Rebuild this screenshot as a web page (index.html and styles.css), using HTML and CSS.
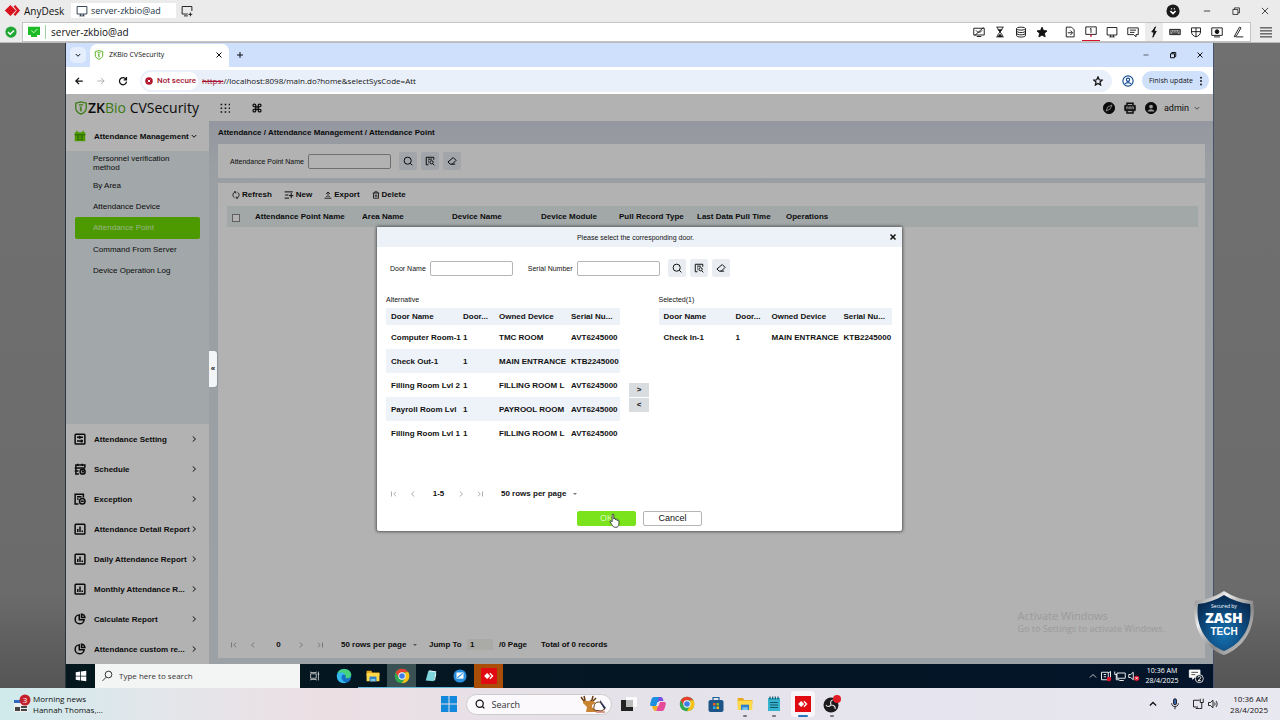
FILE: index.html
```html
<!DOCTYPE html>
<html lang="en">
<head>
<meta charset="utf-8">
<title>AnyDesk - server-zkbio@ad</title>
<link rel="stylesheet" href="styles.css">
</head>
<body>
<svg class="sprite" aria-hidden="true">
  <defs>
    <symbol id="monitor" viewBox="0 0 16 16"><path d="M1.500 2h13v10h-13zM6 14.500V12M10 14.500V12M4.500 14.500h7"/></symbol>
    <symbol id="monitor-add" viewBox="0 0 16 16"><path d="M9 12H1.500V2h13v6M4 14.500h5M12.500 10v5M10 12.500h5"/></symbol>
    <symbol id="min" viewBox="0 0 16 16"><path d="M3 8h10"/></symbol>
    <symbol id="restore" viewBox="0 0 16 16"><path d="M3 5.500h8v8H3zM5.500 5.500V3h8v8H11"/></symbol>
    <symbol id="close" viewBox="0 0 16 16"><path d="M3 3l10 10M13 3L3 13"/></symbol>
    <symbol id="plus" viewBox="0 0 16 16"><path d="M8 2v12M2 8h12"/></symbol>
    <symbol id="down" viewBox="0 0 16 16"><path d="M3.500 6L8 10.500 12.500 6"/></symbol>
    <symbol id="up" viewBox="0 0 16 16"><path d="M3 10.500L8 5.500l5 5"/></symbol>
    <symbol id="right" viewBox="0 0 16 16"><path d="M5.500 3L11 8l-5.500 5"/></symbol>
    <symbol id="left" viewBox="0 0 16 16"><path d="M10.500 3L5 8l5.500 5"/></symbol>
    <symbol id="first" viewBox="0 0 16 16"><path d="M3 3v10M12 3.500L7.500 8l4.500 4.500"/></symbol>
    <symbol id="last" viewBox="0 0 16 16"><path d="M13 3v10M4 3.500L8.500 8 4 12.500"/></symbol>
    <symbol id="search" viewBox="0 0 16 16"><circle cx="7.500" cy="7.500" r="5.700"/><path d="M11.500 11.500L15 15"/></symbol>
    <symbol id="search-list" viewBox="0 0 16 16"><path d="M5.500 14H2V2h12v4M5 5h6M5 8h1.500M5 11h1"/><circle cx="10.500" cy="10" r="2.600"/><path d="M12.500 12.500L15 15"/></symbol>
    <symbol id="eraser" viewBox="0 0 16 16"><path d="M10 2.500L14.500 7 8.500 13H5L1.500 9.500zM7.500 13H13"/></symbol>
    <symbol id="refresh" viewBox="0 0 16 16"><path d="M5 13.500A6.300 6.300 0 0 1 6 2M4 1.500h3.500V5M11 2.500A6.300 6.300 0 0 1 10 14M12 14.500H8.500V11"/></symbol>
    <symbol id="new" viewBox="0 0 16 16"><path d="M1 3h13M2 8h5M1 13h7M11.500 5v8M8 9h7"/></symbol>
    <symbol id="export" viewBox="0 0 16 16"><path d="M8 12V2M4 6l4-4 4 4M1 14.500h14M4 11.500h2M10 11.500h2"/></symbol>
    <symbol id="trash" viewBox="0 0 16 16"><path d="M1.500 4h13M5.500 4V1.500h5V4M3 4v10.500h10V4M6.500 7v5M9.500 7v5"/></symbol>
    <symbol id="setting" viewBox="0 0 16 16"><rect x="1.500" y="1.500" width="13" height="13" rx="1"/><path d="M4 5.500h2M9 5.500h3M4 10.500h4M11 10.500h1"/><circle cx="7.500" cy="5.500" r="1"/><circle cx="10" cy="10.500" r="1"/></symbol>
    <symbol id="schedule" viewBox="0 0 16 16"><path d="M6.500 14.500h-4v-12h12V6M1 6.500h14M5 1v3M11 1v3M1 10.500h5"/><circle cx="11.500" cy="11.500" r="3.300"/><path d="M11.500 9.500v2h2"/></symbol>
    <symbol id="exception" viewBox="0 0 16 16"><path d="M6 14.500H1.500v-13h11V6M4 5h6M4 8h2"/><circle cx="11" cy="11" r="3.700"/><path d="M9 11h4"/></symbol>
    <symbol id="bars" viewBox="0 0 16 16"><rect x="1.500" y="1.500" width="13" height="13" rx="1"/><path d="M5 12V8M8 12V4.500M11 12v-2"/></symbol>
    <symbol id="pie" viewBox="0 0 16 16"><path d="M7 2.500A6 6 0 1 0 13.500 9H7zM10 1.500V6h4.500A4.800 4.800 0 0 0 10 1.500z"/></symbol>
    <symbol id="shield" viewBox="0 0 16 16"><path d="M2 2.500L8 1l6 1.500V8c0 3.500-2.500 5.500-6 7-3.500-1.500-6-3.500-6-7z"/><path d="M5.500 4.500h5M8 6.500V12M6.500 7h1.500M6.500 9.500h1.500"/></symbol>
    <symbol id="star" viewBox="0 0 16 16"><path d="M8 1.500l2 4.500 4.700.5-3.500 3.200 1 4.800L8 12l-4.200 2.500 1-4.800L1.300 6.500 6 6z"/></symbol>
    <symbol id="user" viewBox="0 0 16 16"><circle cx="8" cy="8" r="6.800"/><circle cx="8" cy="6.300" r="2.200"/><path d="M4 12c1.500-2.500 6.500-2.500 8 0"/></symbol>
    <symbol id="anydesk" viewBox="0 0 16 16"><path fill="#fff" stroke="none" d="M1.500 8L5.500 4l4 4-4 4zM8.500 5l1.200-1.200L14 8l-4.300 4.200L8.500 11l3-3z"/></symbol>
    <symbol id="chrome" viewBox="0 0 24 24"><g stroke="none"><circle cx="12" cy="12" r="11" fill="#31a852"/><path fill="#e8402f" d="M2.500 6.500A11 11 0 0 1 21.500 6.500H12L7.200 14.700z"/><path fill="#fbc116" d="M21.500 6.500A11 11 0 0 1 12 23l4.800-8.300L16.800 6.500z"/><circle cx="12" cy="12" r="5.500" fill="#fff"/><circle cx="12" cy="12" r="4.200" fill="#3e7de8"/></g></symbol>
    <symbol id="folder" viewBox="0 0 24 24"><g stroke="none"><path fill="#e9a820" d="M1 3h8l2 3h12v6H1z"/><path fill="#ffd94a" d="M1 7h22v14H1z"/><path fill="#2f80c9" d="M6 13h12v8H6z"/><path fill="#7cc7ee" d="M8 17h8v4H8z"/></g></symbol>
    <symbol id="winlogo" viewBox="0 0 16 16"><path stroke="none" fill="#fff" d="M1 3l6-1v5.500H1zM8 1.900L15 1v6.500H8zM1 8.500h6V14l-6-1zM8 8.500h7V15l-7-.9z"/></symbol>
    <symbol id="sound" viewBox="0 0 16 16"><path d="M2 6v4h2.500L8 13V3L4.500 6zM10 6c1 1 1 3 0 4M12 4c2 2 2 6 0 8"/></symbol>
    <symbol id="net" viewBox="0 0 16 16"><path d="M8 12H2V3h8M5 14h5M11 1v5h4V1M13 6v8h-3"/></symbol>
  </defs>
</svg>

<header class="titlebar">
  <svg class="logo" viewBox="0 0 20 16"><path fill="#d9131e" d="M1 8l7-7 7 7-7 7z"/><path fill="#d9131e" d="M12 3l2-2 6 7-6 7-2-2 4-5z"/></svg>
  <span class="brand">AnyDesk</span>
  <span class="session"><svg class="ic"><use href="#monitor"/></svg>server-zkbio@ad</span>
  <button class="bare" aria-label="New session"><svg class="ic"><use href="#monitor-add"/></svg></button>
  <div class="winctl">
    <svg class="ic14 profile" viewBox="0 0 16 16"><circle cx="8" cy="8" r="7.500" fill="#1b1b1b" stroke="none"/><path stroke="#fff" stroke-width="1.800" d="M5 8l3 3 3-3M6 5.500h1M9 5.500h1"/></svg>
    <button class="bare" aria-label="Minimize"><svg class="ic10"><use href="#min"/></svg></button>
    <button class="bare" aria-label="Restore"><svg class="ic10"><use href="#restore"/></svg></button>
    <button class="bare" aria-label="Close"><svg class="ic10"><use href="#close"/></svg></button>
  </div>
</header>

<div class="addressbar">
  <svg class="check" viewBox="0 0 16 16"><circle cx="8" cy="8" r="7.500" fill="#22a634"/><path d="M4 8l3 3 5-5" fill="none" stroke="#fff" stroke-width="2"/></svg>
  <div class="address">
    <svg class="check" viewBox="0 0 16 16"><path d="M0 1h16v11H0zM4 12h8v2.500H4z" fill="#1dbb25"/><path d="M4.500 6l3 3 5-5" fill="none" stroke="#d8ffd8" stroke-width="1.200"/></svg>
    <span class="host">server-zkbio@ad</span>
    <div class="tools">
      <svg class="ic" viewBox="0 0 16 16"><path d="M1 3h14v9H1zM5 14h6M2 13L14 2M4 6c2 3 6 3 8 0"/></svg>
      <svg class="ic" viewBox="0 0 16 16"><path d="M3 1.500h10M3 14.500h10M4.500 2c0 4 7 8 7 12M11.500 2c0 4-7 8-7 12"/><path fill="#222" d="M6 5h4L8 7.500zM8 11l2.500 3h-5z"/></svg>
      <svg class="ic" viewBox="0 0 16 16"><ellipse cx="8" cy="3.500" rx="6" ry="2"/><path d="M2 3.500v9c0 3 12 3 12 0v-9M2 6.500c0 3 12 3 12 0M2 9.500c0 3 12 3 12 0"/></svg>
      <svg class="ic solid"><use href="#star"/></svg>
      <i class="gap"></i>
      <svg class="ic" viewBox="0 0 16 16"><path d="M3 1.500h7l3.500 3.500v9.500H3zM5 9h6M8.500 6l3 3-3 3"/></svg>
      <span class="screen-on"><svg class="ic" viewBox="0 0 16 16"><path d="M1 2.500h14v10H1zM6.500 5.500L8 4.500v6"/><path stroke="#d3142b" stroke-width="2" d="M8 12.500v3"/></svg></span>
      <svg class="ic"><use href="#monitor"/></svg>
      <svg class="ic" viewBox="0 0 16 16"><path d="M1 2.500h14v9h-3v3l-3-3H1zM4 5.500h8M4 8.500h6"/></svg>
      <span class="bolt"><svg class="ic" viewBox="0 0 16 16"><path fill="#111" d="M10 1L5 8h3L6.500 15 11 7H8z"/></svg></span>
      <svg class="ic" viewBox="0 0 16 16"><path fill="#999" d="M1 4.500h14v7H1z"/><path d="M3 7h1M6 7h1M9 7h1M12 7h1M4 9.500h8"/></svg>
      <svg class="ic" viewBox="0 0 16 16"><path d="M2 2.500h12V8c0 3.500-3 5.500-6 6.500C5 13.500 2 11.500 2 8zM8 2.500v12M2 7.500h12"/></svg>
      <svg class="ic" viewBox="0 0 16 16"><path d="M1 2.500h14v10H1zM4 14.500h8"/><circle cx="8" cy="7.500" r="2.500" fill="#111"/></svg>
      <svg class="ic" viewBox="0 0 16 16"><path d="M4 12L10 1.500l2 1L6 13l-3 1.500zM5 14.500h10"/></svg>
    </div>
  </div>
  <button class="bare menu" aria-label="Menu"><svg class="ic" viewBox="0 0 16 16"><path d="M0 2.500h16M0 6.500h16M0 10.500h16M0 14.500h16"/></svg></button>
</div>

<main class="stage">
  <div class="remote">
    <div class="tabstrip">
      <button class="tabdown" aria-label="Search tabs"><svg class="ic8 heavy"><use href="#down"/></svg></button>
      <div class="tab"><svg class="ic10 green"><use href="#shield"/></svg><span>ZKBio CVSecurity</span><button class="bare" aria-label="Close tab"><svg class="ic8 heavy"><use href="#close"/></svg></button></div>
      <button class="bare addtab" aria-label="New tab"><svg class="ic8 heavy"><use href="#plus"/></svg></button>
      <div class="winctl chromectl"><svg class="ic8"><use href="#min"/></svg><svg class="ic8 heavy"><use href="#restore"/></svg><svg class="ic8 heavy"><use href="#close"/></svg></div>
    </div>
    <div class="navbar">
      <svg class="ic10 heavy" viewBox="0 0 16 16"><path d="M14 8H3M8 3L3 8l5 5"/></svg>
      <svg class="ic10 faint" viewBox="0 0 16 16"><path d="M2 8h11M8 3l5 5-5 5"/></svg>
      <svg class="ic10 heavy" viewBox="0 0 16 16"><path d="M13 5.500A5.700 5.700 0 1 0 13.700 9M13.500 1.500V6H9"/></svg>
      <div class="omnibox">
        <span class="notsecure"><svg class="ic8" viewBox="0 0 16 16"><circle cx="8" cy="8" r="7.500" fill="#b3122a" stroke="none"/><path stroke="#fff" stroke-width="2" d="M5.500 5.500l5 5M10.500 5.500l-5 5"/></svg>Not secure</span>
        <span class="url"><s>https:</s>//localhost:8098/main.do?home&amp;selectSysCode=Att</span>
        <svg class="ic10 heavy"><use href="#star"/></svg>
      </div>
      <svg class="ic12 navy"><use href="#user"/></svg>
      <button class="update">Finish update <svg class="ic10" viewBox="0 0 16 16"><path stroke-width="3" stroke-linecap="round" d="M8 2.500v.1M8 8v.1M8 13.500v.1"/></svg></button>
    </div>

    <div class="app">
      <div class="apphead">
        <div class="applogo"><svg class="ic14 green"><use href="#shield"/></svg><span><b>ZK</b><em>Bio</em> CVSecurity</span></div>
        <svg class="ic10" viewBox="0 0 16 16"><path stroke-width="2.500" stroke-dasharray="2.500 4" d="M1 2.500h16M1 8.500h16M1 14.500h16"/></svg>
        <svg class="ic10 heavy" viewBox="0 0 16 16"><path d="M6 6h4v4H6zM6 6H3.500A2.200 2.200 0 1 1 6 3.500zM10 6V3.500A2.200 2.200 0 1 1 12.500 6zM10 10h2.500A2.200 2.200 0 1 1 10 12.500zM6 10v2.500A2.200 2.200 0 1 1 3.500 10z"/></svg>
        <div class="account">
          <svg class="ic12" viewBox="0 0 16 16"><circle cx="8" cy="8" r="7.500" fill="#111"/><path stroke="#ccc" d="M12 4L9.500 9.500 4 12l2.500-5.500z"/></svg>
          <svg class="ic12" viewBox="0 0 16 16"><path stroke-width="2" d="M4 4V1.500h8V4M4 12v2.500h8V12"/><path fill="#222" d="M1 4.500h14v7H1z"/><path stroke="#ccc" d="M3.500 9.500v-3h2v3M7 9.500v-3h2v3M10.500 9.500v-3h2v3"/></svg>
          <svg class="ic12" viewBox="0 0 16 16"><circle cx="8" cy="8" r="7.500" fill="#111"/><circle cx="8" cy="6" r="2.500" fill="#ddd" stroke="none"/><path fill="#ddd" stroke="none" d="M3.500 12.500c1-4 8-4 9 0z"/></svg>
          <span class="who">admin <svg class="ic8"><use href="#down"/></svg></span>
        </div>
      </div>
      <div class="appbody">
        <nav class="sidebar">
          <a class="group" href="#"><svg class="ic12" viewBox="0 0 16 16"><path fill="#6ddc00" stroke="none" d="M1 3h2V1h2v2h6V1h2v2h2v12H1z"/><path stroke="#2f7410" stroke-width="1.200" d="M1 6.500h14M4 9.500h3M9 9.500h3M4 12.500h3M9 12.500h3"/></svg><span>Attendance Management</span><svg class="ic8 heavy"><use href="#down"/></svg></a>
          <div class="sub">
            <a class="two" href="#">Personnel verification method</a>
            <a href="#">By Area</a>
            <a href="#">Attendance Device</a>
            <a class="on" href="#">Attendance Point</a>
            <a href="#">Command From Server</a>
            <a href="#">Device Operation Log</a>
          </div>
          <a class="group" href="#"><svg class="ic12 heavy"><use href="#setting"/></svg><span>Attendance Setting</span><svg class="ic8 heavy"><use href="#right"/></svg></a>
          <a class="group" href="#"><svg class="ic12 heavy"><use href="#schedule"/></svg><span>Schedule</span><svg class="ic8 heavy"><use href="#right"/></svg></a>
          <a class="group" href="#"><svg class="ic12 heavy"><use href="#exception"/></svg><span>Exception</span><svg class="ic8 heavy"><use href="#right"/></svg></a>
          <a class="group" href="#"><svg class="ic12 heavy"><use href="#bars"/></svg><span>Attendance Detail Report</span><svg class="ic8 heavy"><use href="#right"/></svg></a>
          <a class="group" href="#"><svg class="ic12 heavy"><use href="#bars"/></svg><span>Daily Attendance Report</span><svg class="ic8 heavy"><use href="#right"/></svg></a>
          <a class="group" href="#"><svg class="ic12 heavy"><use href="#bars"/></svg><span>Monthly Attendance R...</span><svg class="ic8 heavy"><use href="#right"/></svg></a>
          <a class="group" href="#"><svg class="ic12 heavy"><use href="#pie"/></svg><span>Calculate Report</span><svg class="ic8 heavy"><use href="#right"/></svg></a>
          <a class="group" href="#"><svg class="ic12 heavy"><use href="#pie"/></svg><span>Attendance custom re...</span><svg class="ic8 heavy"><use href="#right"/></svg></a>
        </nav>
        <button class="collapse" aria-label="Collapse sidebar">«</button>
        <section class="content">
          <div class="crumbs">Attendance / Attendance Management / Attendance Point</div>
          <form class="filter panel">
            <label for="apn">Attendance Point Name</label><input id="apn" type="text">
            <div class="sq"><button type="button" aria-label="Search"><svg class="ic10 medium"><use href="#search"/></svg></button><button type="button" aria-label="Advanced search"><svg class="ic10 medium"><use href="#search-list"/></svg></button><button type="button" aria-label="Clear"><svg class="ic10 medium"><use href="#eraser"/></svg></button></div>
          </form>
          <div class="list panel">
            <div class="actions">
              <button><svg class="ic8 medium"><use href="#refresh"/></svg>Refresh</button>
              <button><svg class="ic10 medium"><use href="#new"/></svg>New</button>
              <button><svg class="ic8 medium"><use href="#export"/></svg>Export</button>
              <button><svg class="ic8 medium"><use href="#trash"/></svg>Delete</button>
            </div>
            <table class="main">
              <colgroup><col class="c28"><col class="c107"><col class="c90"><col class="c89"><col class="c78"><col class="c78"><col class="c89"><col></colgroup>
              <thead><tr><th><input type="checkbox" aria-label="Select all"></th><th>Attendance Point Name</th><th>Area Name</th><th>Device Name</th><th>Device Module</th><th>Pull Record Type</th><th>Last Data Pull Time</th><th>Operations</th></tr></thead>
            </table>
            <div class="pager">
              <button class="bare pg" aria-label="First"><svg class="ic8"><use href="#first"/></svg></button><button class="bare pg" aria-label="Previous"><svg class="ic8"><use href="#left"/></svg></button><span class="count">0</span><button class="bare pg" aria-label="Next"><svg class="ic8"><use href="#right"/></svg></button><button class="bare pg" aria-label="Last"><svg class="ic8"><use href="#last"/></svg></button>
              <span class="pick"><select class="rows" aria-label="Rows per page"><option>50 rows per page</option></select></span>
              <label class="jump">Jump To <input type="text" value="1"></label><span class="pages">/0 Page</span><span>Total of 0 records</span>
            </div>
          </div>
        </section>
      </div>

      <div class="watermark"><p>Activate Windows</p><small>Go to Settings to activate Windows.</small></div>

      <div class="backdrop">
        <div class="dialog" role="dialog" aria-labelledby="dt">
          <div class="dhead"><span id="dt">Please select the corresponding door.</span><button class="bare" aria-label="Close dialog"><svg class="ic8 bolder"><use href="#close"/></svg></button></div>
          <form class="dfilter">
            <label for="dn">Door Name</label><input id="dn" type="text">
            <label class="second" for="sn">Serial Number</label><input id="sn" type="text">
            <div class="sq"><button type="button" aria-label="Search"><svg class="ic10 medium"><use href="#search"/></svg></button><button type="button" aria-label="Advanced search"><svg class="ic10 medium"><use href="#search-list"/></svg></button><button type="button" aria-label="Clear"><svg class="ic10 medium"><use href="#eraser"/></svg></button></div>
          </form>
          <div class="transfer">
            <div class="side">
              <h2>Alternative</h2>
              <table class="doors">
                <colgroup><col class="c72"><col class="c36"><col class="c72"><col></colgroup>
                <thead><tr><th>Door Name</th><th>Door...</th><th>Owned Device</th><th>Serial Nu...</th></tr></thead>
                <tbody>
                  <tr><td>Computer Room-1</td><td>1</td><td>TMC ROOM</td><td>AVT6245000</td></tr>
                  <tr><td>Check Out-1</td><td>1</td><td>MAIN ENTRANCE</td><td>KTB2245000</td></tr>
                  <tr><td>Filling Room Lvl 2</td><td>1</td><td>FILLING ROOM L</td><td>AVT6245000</td></tr>
                  <tr><td>Payroll Room Lvl</td><td>1</td><td>PAYROOL ROOM</td><td>AVT6245000</td></tr>
                  <tr><td>Filling Room Lvl 1</td><td>1</td><td>FILLING ROOM L</td><td>AVT6245000</td></tr>
                </tbody>
              </table>
            </div>
            <div class="moves"><button>&gt;</button><button>&lt;</button></div>
            <div class="side">
              <h2>Selected(1)</h2>
              <table class="doors">
                <colgroup><col class="c72"><col class="c36"><col class="c72"><col></colgroup>
                <thead><tr><th>Door Name</th><th>Door...</th><th>Owned Device</th><th>Serial Nu...</th></tr></thead>
                <tbody><tr><td>Check In-1</td><td>1</td><td>MAIN ENTRANCE</td><td>KTB2245000</td></tr></tbody>
              </table>
            </div>
          </div>
          <div class="pager">
            <button class="bare pg" aria-label="First"><svg class="ic8"><use href="#first"/></svg></button><button class="bare pg" aria-label="Previous"><svg class="ic8"><use href="#left"/></svg></button><span class="count">1-5</span><button class="bare pg" aria-label="Next"><svg class="ic8"><use href="#right"/></svg></button><button class="bare pg" aria-label="Last"><svg class="ic8"><use href="#last"/></svg></button>
            <span class="pick"><select class="rows" aria-label="Rows per page"><option>50 rows per page</option></select></span>
          </div>
          <div class="dfoot"><button class="ok">OK<svg class="cursor" viewBox="0 0 16 22"><path fill="#fff" stroke="#222" stroke-width="1.200" d="M4.500 13V3c0-2 2.500-2 2.500 0v6c0-1.500 2.500-1.500 2.500 0v1c0-1.500 2.500-1.300 2.500.3v1c0-1.300 2.500-1.300 2.500.2V16c0 3-1.500 5-4.500 5-3.500 0-4.500-1.500-6-4l-2.500-4c-.8-1.500 1.200-2.300 2-1z"/></svg></button><button class="cancel">Cancel</button></div>
        </div>
      </div>
    </div>

    <div class="rtask">
      <button class="cell start" aria-label="Start"><svg class="ic12"><use href="#winlogo"/></svg></button>
      <label class="rsearch"><svg class="ic12" viewBox="0 0 16 16"><circle cx="10" cy="6" r="4.500"/><path d="M7 9.500L2 14.500"/></svg><input type="text" placeholder="Type here to search" aria-label="Type here to search"></label>
      <span class="cell"><svg class="ic10" viewBox="0 0 16 16"><path d="M1 4.500h9v7H1zM1 1v1.500h9V1M1 15v-1.500h9V15M13.500 1v14M12 5h3"/></svg></span>
      <span class="cell"><svg class="ic16" viewBox="0 0 24 24"><g stroke="none"><circle cx="12" cy="12" r="11" fill="#1570c4"/><path fill="#46d17c" d="M2 8C5 0 19-1 22.500 8c1.500 5-2 8-6 7.500-2-.2-2.500-1.200-2-2.500C15.500 9 8 6 2 8z"/><path fill="#36b9ea" d="M1.500 10C3 5 12 5 14 10c-5-1-7 3-5 7 1 2.500 4 4.500 7 4.500C9 25 0 20 1.500 10z"/></g></svg></span>
      <span class="cell run"><svg class="ic14"><use href="#folder"/></svg></span>
      <span class="cell run active"><svg class="ic16"><use href="#chrome"/></svg></span>
      <span class="cell run"><svg class="ic14" viewBox="0 0 16 16"><path fill="#7fd6dc" stroke="none" d="M5 2l9 1-3 11-9-1z"/><path stroke="#eaffff" d="M6 2l8 1.500M12 13l1.500-8"/></svg></span>
      <span class="cell run"><svg class="ic14" viewBox="0 0 16 16"><circle cx="8" cy="8" r="7.500" fill="#2b8fe0" stroke="none"/><path fill="#fff" stroke="none" d="M4 4h8v7H4z"/><path stroke="#2b8fe0" d="M5 10l6-5"/></svg></span>
      <span class="cell orange"><span class="adsq"><svg class="ic12"><use href="#anydesk"/></svg></span></span>
      <div class="rtray">
        <svg class="ic10"><use href="#up"/></svg>
        <svg class="ic12" viewBox="0 0 16 16"><path d="M2 3h9v10H2zM11 4l3-2v8M5 6h3M5 9h3"/><circle cx="12" cy="12" r="3" fill="#e0142b" stroke="none"/></svg>
        <svg class="ic12" viewBox="0 0 16 16"><path d="M4 4h11v7H4zM7 14h6M1 2v4h3M3 6v7h4"/></svg>
        <svg class="ic12" viewBox="0 0 16 16"><path d="M1 6v4h2.500L7 13V3L3.500 6z"/><circle cx="11.500" cy="11" r="3.500" fill="#e0142b" stroke="none"/><path d="M10 9.500l3 3M13 9.500l-3 3"/></svg>
        <time>10:36 AM<br>28/4/2025</time>
        <svg class="ic16" viewBox="0 0 24 24"><path fill="#fff" d="M2 3h16v11h-8l-3 3v-3H2z"/><path stroke="#222" d="M5 6.500h10M5 10h6"/><circle cx="17" cy="16" r="6" fill="#0a1420"/><path stroke-width="1.500" d="M15 14.500c0-3 4-2.500 4 0 0 1.500-2 2.500-4 4.500h4"/></svg>
      </div>
    </div>
  </div>

  <svg class="badge" viewBox="0 0 62 66">
    <defs>
      <linearGradient id="metal" x1="0" y1="0" x2="1" y2="1"><stop offset="0" stop-color="#777"/><stop offset=".3" stop-color="#eee"/><stop offset=".6" stop-color="#888"/><stop offset="1" stop-color="#ddd"/></linearGradient>
      <radialGradient id="blue" cx=".5" cy=".7" r=".7"><stop offset="0" stop-color="#1573b4"/><stop offset="1" stop-color="#07284e"/></radialGradient>
    </defs>
    <path fill="url(#metal)" d="M31 1C40 7 51 10 60 11C64 36 52 57 31 65C10 57-2 36 2 11C11 10 22 7 31 1z"/>
    <path fill="url(#blue)" d="M31 5C39 10 48 13 57 14C60 36 49 54 31 61C13 54 2 36 5 14C14 13 23 10 31 5z"/>
    <g fill="#fff" text-anchor="middle" font-family="Open Sans, sans-serif"><text x="31" y="18" font-size="5">Secured by</text><text x="31" y="33" font-size="14" font-weight="800">ZASH</text><text x="31" y="45" font-size="10" font-weight="700" font-family="Liberation Sans, sans-serif">TECH</text></g>
  </svg>
</main>

<footer class="taskbar">
  <div class="news">
    <svg viewBox="0 0 20 20"><path fill="#2d6cc0" d="M2 6h14v3H2z"/><path fill="#eee" d="M2 9h14v9H2z"/><path fill="#444" d="M3 13h5v4H3zM9 12h6v2H9zM9 15h6v2H9z"/><circle cx="13" cy="6" r="5.500" fill="#c4202b"/><text x="13" y="9" font-size="8" fill="#fff" text-anchor="middle" font-family="Open Sans, sans-serif">3</text></svg>
    <p>Morning news<br>Hannah Thomas,...</p>
  </div>
  <div class="dock">
    <span class="slot"><svg class="ic16" viewBox="0 0 16 16"><path fill="#1389dc" stroke="none" d="M0 0h7.500v7.500H0zM8.500 0H16v7.500H8.500zM0 8.500h7.500V16H0zM8.500 8.500H16V16H8.500z"/></svg></span>
    <label class="hsearch"><svg class="ic10 heavy"><use href="#search"/></svg><input type="text" placeholder="Search" aria-label="Search">
      <svg class="art" viewBox="0 0 28 18"><path fill="none" stroke="#6b3d12" stroke-width="1.500" d="M2 2l2 3 4 2M5 1l1 4M14 1l-1 4-3 2M17 3l-3 3"/><path fill="#c98431" d="M4 6h10l3 2-4 2v2l5 5H7l1-5-4-4z"/><path fill="#fff" stroke="#6b3d12" d="M15 15c-1-6 3-10 7-7l4 6-4 2z"/><path fill="#2c3258" d="M21 5l6 8-2 1-4-7z"/><path stroke="#b5412d" d="M17 17h9"/></svg></label>
    <span class="slot"><svg class="ic16" viewBox="0 0 16 16"><path fill="#fafafa" stroke="none" d="M5 1h11v10H5z"/><path fill="#222" stroke="none" d="M0 4h5v7h7v4H0z"/><path fill="#bbb" stroke="none" d="M5 4h7v7H5z"/></svg></span>
    <span class="slot"><svg class="ic16" viewBox="0 0 16 16"><g stroke="none"><path fill="#1c8fe0" d="M4 1h6L7 10H2C-.5 10 0 8 1 5c.7-3 1.500-4 3-4z"/><path fill="#7b4fe0" d="M9 1h2c1.500 0 2 2 2.500 4H9L7 8z"/><path fill="#e64b9a" d="M12 15H6l3-9h5c2.500 0 2 2 1 5s-1.500 4-3 4z"/><path fill="#f2b029" d="M2 10h6l-2 5C3.500 15 3 13 2 10z"/><path fill="#e6e1e8" d="M7.500 6h2.500L8.500 10H6z"/></g></svg></span>
    <span class="slot"><svg class="ic16"><use href="#chrome"/></svg></span>
    <span class="slot"><svg class="ic16" viewBox="0 0 16 16"><path stroke="#1b5f9e" d="M5 5V1.500h6V5"/><rect x=".5" y="4" width="15" height="12" rx="2" fill="#1c5488" stroke="none"/><path fill="#f15a29" stroke="none" d="M5 7h2.500v2.500H5z"/><path fill="#7db928" stroke="none" d="M8.500 7H11v2.500H8.500z"/><path fill="#2bb1ee" stroke="none" d="M5 10.500h2.500V13H5z"/><path fill="#fbbc14" stroke="none" d="M8.500 10.500H11V13H8.500z"/></svg></span>
    <span class="slot dot"><svg class="ic16"><use href="#folder"/></svg></span>
    <span class="slot dot"><svg class="ic16" viewBox="0 0 16 16"><path fill="#36b4cf" stroke="none" d="M2 2h12v13H2z"/><path stroke="#12576c" d="M4 .5v3M6.700.5v3M9.300.5v3M12 .5v3M4 6.500h8M4 9h8M4 11.500h8"/></svg></span>
    <span class="slot focus"><span class="adsq"><svg class="ic12"><use href="#anydesk"/></svg></span></span>
    <span class="slot dot"><svg class="ic18" viewBox="0 0 18 18"><circle cx="8" cy="10" r="7.500" fill="#1c1a1c" stroke="none"/><path stroke="#ddd" d="M8 10c-1-3 0-5 2-5M8 10c3 0 5 2 4 4M8 10c-2 2-4 2-5 0"/><circle cx="14" cy="4" r="4" fill="#e01b23" stroke="none"/></svg></span>
  </div>
  <div class="tray">
    <svg class="ic10 heavy"><use href="#up"/></svg>
    <svg class="ic12" viewBox="0 0 16 16"><rect x="6" y="1" width="4" height="8" rx="2" fill="#3563a8"/><path d="M3.500 7c0 6 9 6 9 0M8 12v3"/></svg>
    <div class="pair"><svg class="ic12"><use href="#net"/></svg><svg class="ic12"><use href="#sound"/></svg></div>
    <time>10:36 AM<br>28/4/2025</time>
  </div>
</footer>
</body>
</html>
```

FILE: styles.css
```css
* { box-sizing: border-box; }
body {
  margin: 0;
  height: 100vh;
  display: flex;
  flex-direction: column;
  overflow: hidden;
  font: 8px/11px "Liberation Sans", Arial, sans-serif;
  color: #111;
  background: #ebebeb;
}
button, input, select { font: inherit; color: inherit; }
button { padding: 0; cursor: pointer; }
a { color: inherit; text-decoration: none; }
p, h2 { margin: 0; }
.sprite { position: absolute; width: 0; height: 0; }
svg { flex: none; display: block; }
.bare { border: 0; background: none; display: flex; align-items: center; justify-content: center; }
.ic, .ic8, .ic10, .ic12, .ic14, .ic16, .ic18 { fill: none; stroke: currentColor; stroke-width: 1.200; }
.ic { width: 12px; height: 12px; }
.ic8 { width: 8px; height: 8px; }
.ic10 { width: 10px; height: 10px; }
.ic12 { width: 12px; height: 12px; }
.ic14 { width: 14px; height: 14px; }
.ic16 { width: 16px; height: 16px; }
.ic18 { width: 18px; height: 18px; }
.medium { stroke-width: 1.600; }
.heavy { stroke-width: 2; }
.bolder { stroke-width: 3; }
.faint { color: #999; }
.green { color: #57b01c; stroke-width: 1.500; }
.navy { color: #124a91; stroke-width: 1.500; }
.solid { fill: #111; }

/* AnyDesk window */
.titlebar {
  height: 21px;
  flex: none;
  display: flex;
  align-items: center;
  padding: 0 10px 0 4px;
  font: 10px/14px "Open Sans", sans-serif;
}
.logo { width: 16px; height: 13px; }
.brand { margin-left: 4px; width: 47px; }
.session {
  display: flex;
  align-items: center;
  gap: 3px;
  width: 105px;
  height: 15px;
  padding-left: 5px;
  margin-right: 5px;
  background: #fff;
  font-size: 9px;
  color: #234;
}
.winctl { margin-left: auto; display: flex; align-items: center; gap: 19px; }
.profile { margin-right: 3px; }
.addressbar { height: 22px; flex: none; display: flex; align-items: center; padding-left: 5px; border-bottom: 1px solid #bbb; }
.check { width: 12px; height: 12px; }
.address {
  flex: 1;
  height: 20px;
  display: flex;
  align-items: center;
  margin-left: 5px;
  padding-left: 5px;
  background: #fff;
  border: 1px solid #c4c4c4;
  font: 10px/14px "Open Sans", sans-serif;
}
.host { margin-left: 5px; padding-left: 5px; border-left: 1px solid #9fd0a5; }
.tools { margin-left: auto; display: flex; align-items: center; gap: 9px; padding-right: 6px; height: 100%; }
.gap { width: 0; margin-left: -2px; }
.screen-on, .bolt { align-self: stretch; width: 18px; margin: 0 -3px; display: flex; align-items: center; justify-content: center; }
.screen-on { border-bottom: 1px solid #d3142b; }
.bolt { background: #ececec; }
.menu { width: 29px; }

.stage {
  position: relative;
  flex: 1;
  min-height: 0;
  display: flex;
  padding: 0 66px 0 65px;
  background: linear-gradient(#707070, #6b6b6b 85%, #555);
}
.remote { flex: 1; min-width: 0; display: flex; flex-direction: column; border-left: 1px solid #2b3340; border-right: 1px solid #46536b; background: #fff; }

/* Chrome */
.tabstrip { height: 24px; flex: none; display: flex; background: #cee0fc; font: 7px/11px "Open Sans", sans-serif; }
.tabdown { width: 16px; height: 16px; margin: 4px; border: 0; border-radius: 5px; background: #e4eefd; display: grid; place-items: center; }
.tab { width: 139px; margin-top: 1px; padding: 0 6px 2px 4px; display: flex; align-items: center; gap: 5px; background: #fff; border-radius: 7px 7px 0 0; }
.tab span { flex: 1; }
.addtab { margin-left: 7px; }
.chromectl { padding-right: 9px; }
.navbar { height: 27px; flex: none; display: flex; align-items: center; gap: 12px; padding: 0 4px 0 8px; background: #fff; font: 8px/11px "Open Sans", sans-serif; }
.omnibox { flex: 1; height: 22px; display: flex; align-items: center; padding: 0 9px 0 2px; border-radius: 11px; background: #eaf0fa; }
.notsecure { display: flex; align-items: center; gap: 4px; height: 18px; width: 56px; padding-left: 3px; border-radius: 9px; background: #fff; color: #a51430; font-family: Roboto, sans-serif; font-weight: 500; white-space: nowrap; }
.url { margin: 0 auto 0 4px; }
.url s { color: #a51430; }
.update { display: flex; align-items: center; gap: 3px; height: 19px; padding: 0 3px 0 7px; border: 0; border-radius: 10px; background: #cfe0fb; font-size: 7px; white-space: nowrap; }
.navbar > .navy { margin: 0 -4px 0 -2px; }

/* ZKBio application */
.app { position: relative; flex: 1; min-height: 0; display: flex; flex-direction: column; background: #dbe4ee; }
.apphead { height: 27px; flex: none; display: flex; align-items: center; gap: 22px; padding: 0 12px 0 8px; background: #fff; }
.applogo { display: flex; align-items: center; width: 124px; font: 14px/18px "Open Sans", sans-serif; white-space: nowrap; }
.applogo b { font-weight: 600; }
.applogo em { font-style: normal; color: #57b01c; }
.account { margin-left: auto; display: flex; align-items: center; gap: 9px; font: 9px/12px Roboto, sans-serif; }
.who { display: flex; align-items: center; gap: 4px; margin-left: -2px; }
.appbody { flex: 1; min-height: 0; display: flex; background: linear-gradient(#d5d9e4, #dde4ea 8%, #e0e7ec); }
.sidebar { width: 143px; flex: none; display: flex; flex-direction: column; background: #fff; }
.group { height: 30px; flex: none; display: flex; align-items: center; gap: 8px; padding: 0 11px 0 8px; font-weight: 700; white-space: nowrap; }
.group span { flex: 1; min-width: 0; }
.sub { flex: 1; padding: 3px 9px 0; background: #e8f0f3; }
.sub a { display: block; height: 21px; padding-left: 18px; line-height: 21px; }
.sub a.two { width: 110px; line-height: 9px; }
.sub a.on { height: 22px; line-height: 22px; border-radius: 2px; background: #6ddc00; color: #dcffc0; }
.collapse { align-self: center; width: 8px; height: 36px; margin: -48px -2px 0 0; border: 0; border-radius: 0 3px 3px 0; background: #f3f6f8; box-shadow: 1px 0 1px #8a9298; z-index: 1; font-weight: 700; }
.content { flex: 1; min-width: 0; display: flex; flex-direction: column; padding: 0 8px 6px 3px; }
.panel { background: #fff; }
.crumbs { height: 23px; line-height: 24px; font-weight: 700; }
.filter { height: 34px; flex: none; display: flex; align-items: center; padding-left: 12px; font-size: 7px; }
.filter input, .dfilter input { width: 83px; height: 15px; margin-left: 4px; border: 1px solid #b5b5b5; border-radius: 2px; background: #fff; padding: 0 3px; }
.filter input { border-color: #a0a0a0; }
.sq { display: flex; gap: 4px; margin-left: 8px; }
.sq button { width: 18px; height: 18px; border: 0; border-radius: 2px; background: #e9edf2; display: grid; place-items: center; }
.list { flex: 1; min-height: 0; margin-top: 5px; padding: 0 7px 0 9px; display: flex; flex-direction: column; }
.actions { height: 23px; flex: none; display: flex; align-items: center; gap: 12px; padding-left: 5px; }
.actions button { display: flex; align-items: center; gap: 2px; border: 0; background: none; font-weight: 700; }
table { border-collapse: collapse; table-layout: fixed; width: 100%; font-weight: 700; }
th, td { padding: 0; text-align: left; white-space: nowrap; }
.main th { height: 21px; background: #e8eff1; }
.main input { display: block; width: 8px; height: 8px; margin: 2px 0 0 5px; appearance: none; border: 1px solid #888; background: #fff; }
.c28 { width: 28px; } .c107 { width: 107px; } .c90 { width: 90px; } .c89 { width: 89px; } .c78 { width: 78px; }
.c72 { width: 72px; } .c36 { width: 36px; }
.pager { display: flex; align-items: center; height: 27px; padding-left: 3px; font-weight: 700; white-space: nowrap; }
.list .pager { margin-top: auto; }
.pg { width: 8px; margin-right: 11px; color: #777; }
.count { width: 21px; margin-right: 8px; text-align: center; }
.pick { position: relative; width: 78px; margin-left: 6px; }
.pick::after { content: ""; position: absolute; right: 2px; top: 5px; border: 2px solid transparent; border-top-color: #777; }
.rows { width: 100%; display: block; border: 0; padding: 0; appearance: none; background: none; font-weight: 700; }
.jump { margin-left: 10px; }
.jump input { width: 26px; height: 11px; margin-left: 3px; padding: 0 3px; border: 0; background: #f4f4ef; font-weight: 700; }
.pages { margin: 0 14px 0 6px; }

.backdrop { position: absolute; inset: 0; display: grid; place-items: center; background: rgba(0, 0, 0, .3); }
.dialog { width: 527px; border: 1px solid #777; border-radius: 3px; background: #fff; box-shadow: 0 0 3px rgba(0, 0, 0, .5); }
.dhead { height: 20px; display: flex; align-items: center; padding: 0 5px; background: #edf2f9; font-size: 7px; }
.dhead span { flex: 1; text-align: center; }
.dfilter { height: 42px; display: flex; align-items: center; padding-left: 13px; font-size: 7px; }
.second { margin-left: 15px; }
.transfer { display: flex; height: 191px; padding: 0 10px 0 9px; }
.side { flex: 1; min-width: 0; }
h2 { height: 19px; padding-top: 5px; font: 7px/11px "Liberation Sans", Arial, sans-serif; }
.doors th, .doors td { padding-left: 5px; }
.doors th { height: 17px; background: #edf2f8; }
.doors td { height: 24px; }
.doors tbody tr:nth-child(even) { background: #eef3fa; }
.moves { width: 39px; flex: none; display: flex; flex-direction: column; align-items: center; gap: 1px; padding-top: 94px; }
.moves button { width: 20px; height: 14px; border: 0; background: #dadde0; font-weight: 700; line-height: 14px; }
.dialog .pager { padding-left: 13px; }
.dfoot { display: flex; justify-content: center; gap: 7px; padding: 4px 0 5px; }
.dfoot button { position: relative; height: 15px; width: 59px; border: 1px solid #b5b5b5; border-radius: 2px; background: #fff; font-size: 9px; line-height: 13px; }
.dfoot .ok { border-color: #7be31b; background: #7be31b; color: #d6f8b4; }
.cursor { position: absolute; left: 31px; top: 1px; width: 11px; height: 15px; }
.watermark { position: absolute; right: 48px; bottom: 29px; color: #dedede; font: 9px/12px "Open Sans", sans-serif; }
.watermark p { font-size: 11px; line-height: 14px; }
.watermark small { font-size: 9px; }

/* Remote taskbar */
.rtask { height: 24px; flex: none; display: flex; background: linear-gradient(90deg, #04181d, #04142a); color: #fff; font: 7px/10px "Open Sans", sans-serif; }
.cell { width: 29px; display: grid; place-items: center; border: 0; border-bottom: 1px solid transparent; background: none; color: #e5e5e5; }
.run { border-bottom-color: #66b8d8; }
.active { background: #3a5154; }
.orange { background: #a84e08; }
.adsq { width: 16px; height: 16px; display: grid; place-items: center; background: #e00b12; }
.rsearch { width: 205px; display: flex; align-items: center; gap: 6px; padding-left: 6px; background: #f3f4f4; color: #222; }
.rsearch input { flex: 1; min-width: 0; border: 0; padding: 0; background: none; font-size: 8px; }
::placeholder { color: #333; opacity: 1; }
.rtray { margin-left: auto; display: flex; align-items: center; gap: 2px; padding-right: 9px; }
.rtray time { width: 34px; margin: 0 7px 0 3px; text-align: center; }
.badge { position: absolute; right: 25px; bottom: 32px; width: 62px; height: 66px; }

/* Host taskbar */
.taskbar {
  height: 32px;
  flex: none;
  display: grid;
  grid-template-columns: 1fr auto 1fr;
  align-items: center;
  padding: 0 12px;
  background: linear-gradient(90deg, #cfeaec, #e2e6ea 12%, #ecdfe4 25%, #e5e1e8 45%, #e6e4ee 70%, #e8e8f1);
  font: 8px/11px "Open Sans", sans-serif;
}
.news { display: flex; align-items: center; gap: 1px; }
.news svg { width: 20px; height: 20px; }
.dock { display: flex; align-items: center; gap: 5px; }
.slot { position: relative; width: 24px; height: 26px; display: grid; place-items: center; border-radius: 3px; }
.dot::after, .focus::after { content: ""; position: absolute; left: 10px; bottom: 0; width: 4px; height: 2px; border-radius: 1px; background: #777; }
.focus { background: #f8f5f8; }
.focus::after { left: 7px; width: 10px; background: #2775bf; }
.hsearch { width: 146px; height: 21px; display: flex; align-items: center; gap: 7px; padding: 0 4px 0 8px; border: 1px solid #ccc; border-radius: 11px; background: #fbf9fb; }
.hsearch input { flex: 1; min-width: 0; border: 0; padding: 0; background: none; font-size: 9px; }
.art { width: 28px; height: 18px; }
.tray { display: flex; align-items: center; justify-content: flex-end; gap: 11px; }
.pair { display: flex; gap: 3px; }
.tray time { text-align: right; }
```
